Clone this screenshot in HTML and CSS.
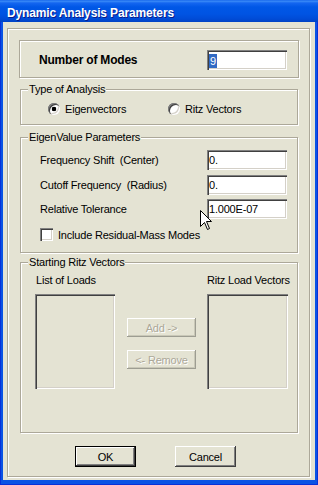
FILE: index.html
```
<!DOCTYPE html>
<html lang="en">
<head>
    <meta charset="UTF-8">
    <meta name="viewport" content="width=device-width, initial-scale=1.0">
    <title>Dynamic Analysis Parameters</title>
    <link rel="stylesheet" href="styles.css">
</head>
<body>
    <div class="window">
        <div class="titlebar">
            <span class="title">Dynamic Analysis Parameters</span>
        </div>
        <div class="client">
            <div class="frame">
                <div class="modes-panel">
                    <span class="modes-label">Number of Modes</span>
                    <div class="field"><span class="selected">9</span></div>
                </div>

                <fieldset class="group type-group">
                    <legend>Type of Analysis</legend>
                    <div class="radio-row">
                        <label class="option option-first"><span class="radio checked"></span>Eigenvectors</label>
                        <label class="option"><span class="radio"></span>Ritz Vectors</label>
                    </div>
                </fieldset>

                <fieldset class="group eigen-group">
                    <legend>EigenValue Parameters</legend>
                    <div class="param-row row-1">
                        <span class="param-label">Frequency Shift  (Center)</span>
                        <div class="field">0.</div>
                    </div>
                    <div class="param-row row-2">
                        <span class="param-label">Cutoff Frequency  (Radius)</span>
                        <div class="field">0.</div>
                    </div>
                    <div class="param-row row-3">
                        <span class="param-label">Relative Tolerance</span>
                        <div class="field">1.000E-07</div>
                    </div>
                    <label class="check-row"><span class="checkbox"></span>Include Residual-Mass Modes</label>
                </fieldset>

                <fieldset class="group ritz-group">
                    <legend>Starting Ritz Vectors</legend>
                    <div class="ritz-cols">
                        <div class="ritz-col col-left">
                            <span class="col-label">List of Loads</span>
                            <div class="listbox"></div>
                        </div>
                        <div class="ritz-mid">
                            <button class="btn btn-disabled">Add -&gt;</button>
                            <button class="btn btn-disabled btn-remove">&lt;- Remove</button>
                        </div>
                        <div class="ritz-col col-right">
                            <span class="col-label">Ritz Load Vectors</span>
                            <div class="listbox"></div>
                        </div>
                    </div>
                </fieldset>

                <div class="dialog-buttons">
                    <button class="btn btn-default">OK</button>
                    <button class="btn">Cancel</button>
                </div>
            </div>
        </div>

        <!-- mouse pointer left over the tolerance box -->
        <svg class="cursor" width="13" height="21" viewBox="0 0 13 21">
            <path d="M0.5 0.5 V16.5 L4.5 12.5 L7.5 19.5 L9.5 18.5 L6.5 11.5 H11.5 Z" fill="#fff" stroke="#000" stroke-width="1"/>
        </svg>
    </div>
</body>
</html>
```

FILE: styles.css
```
:root {
    --face: #e4e3d3;
    --etch: #aca899;
    --dark: #404040;
    --mid: #808080;
    --light: #ffffff;
    --frame-blue: #0a53e4;
    --select: #316ac5;
}

* {
    box-sizing: border-box;
    margin: 0;
    padding: 0;
}

body {
    font-family: 'Liberation Sans', Arial, sans-serif;
    font-size: 11px;
    letter-spacing: -0.2px;
    color: #000;
    background-color: var(--face);
}

.window {
    position: relative;
    width: 318px;
    height: 485px;
    display: flex;
    flex-direction: column;
    background-color: var(--frame-blue);
    box-shadow: inset 1px 0 #0831d9, inset -1px 0 #0831d9, inset 0 -1px #0831d9;
}

.titlebar {
    height: 22px;
    padding: 6px 0 0 7px;
    background: linear-gradient(180deg, #0a5ae8 0, #3d8ef8 1px, #1466f0 3px, #0057e6 7px, #0054e3 14px, #004bd6 19px, #0042c4 22px);
}

.title {
    display: block;
    line-height: 14px;
    font-size: 12px;
    font-weight: bold;
    letter-spacing: -0.15px;
    color: #fff;
    text-shadow: 1px 1px #0a1c8a;
}

.client {
    flex: 1;
    margin: 0 3px 5px;
    padding: 6px 5px 3px 4px;
    background-color: var(--face);
    display: flex;
    flex-direction: column;
}

.frame {
    flex: 1;
    border: 1px solid var(--etch);
    box-shadow: inset 1px 1px var(--light), 1px 1px var(--light);
    padding: 0 10px 0 11px;
    display: flex;
    flex-direction: column;
}

/* number of modes box */
.modes-panel {
    margin-top: 11px;
    height: 38px;
    border: 1px solid var(--etch);
    box-shadow: inset 1px 1px var(--light), 1px 1px var(--light);
    padding: 2px 11px 0 19px;
    display: flex;
    align-items: center;
    justify-content: space-between;
}

.modes-label {
    font-size: 12px;
    font-weight: bold;
    letter-spacing: -0.2px;
}

.field {
    width: 80px;
    height: 20px;
    padding-left: 2px;
    line-height: 20px;
    background-color: #fff;
    box-shadow: inset 1px 1px var(--mid), inset 2px 2px var(--dark), inset -1px -1px var(--light), inset -2px -2px #d4d0c8;
    white-space: nowrap;
}

.selected {
    display: inline-block;
    height: 14px;
    line-height: 14px;
    padding: 0 1px;
    vertical-align: middle;
    background-color: var(--select);
    color: #fff;
}

/* group boxes */
.group {
    margin: 0 1px;
    padding: 0;
    min-width: 0;
    border: 1px solid var(--etch);
    box-shadow: inset 1px 1px var(--light), 1px 1px var(--light);
}

.group legend {
    margin-left: 7px;
    padding: 0 1px;
    line-height: 13px;
    background-color: var(--face);
}

.type-group {
    margin-top: 5px;
    height: 42px;
}

.radio-row {
    display: flex;
    padding: 6px 0 0 27px;
}

.option {
    display: flex;
    align-items: center;
    gap: 5px;
    height: 13px;
}

.option-first {
    width: 120px;
}

.radio {
    width: 12px;
    height: 12px;
    border-radius: 50%;
    background-color: #fff;
    box-shadow: inset 1px 1px var(--mid), inset 2px 2px var(--dark), inset -1px -1px var(--light), inset -2px -2px #d4d0c8;
}

.radio.checked {
    background: radial-gradient(circle at 6px 6px, #000 0, #000 2px, #fff 2.6px);
}

.eigen-group {
    margin-top: 6px;
    height: 122px;
}

.param-row {
    height: 20px;
    padding: 0 10px 0 19px;
    display: flex;
    align-items: center;
    justify-content: space-between;
}

.param-label {
    white-space: pre;
}

.row-1 { margin-top: 6px; }
.row-2 { margin-top: 5px; }
.row-3 { margin-top: 4px; }

.check-row {
    margin-top: 9px;
    padding-left: 19px;
    height: 13px;
    display: flex;
    align-items: center;
    gap: 5px;
}

.checkbox {
    width: 13px;
    height: 13px;
    background-color: #fff;
    box-shadow: inset 1px 1px var(--mid), inset 2px 2px var(--dark), inset -1px -1px var(--light), inset -2px -2px #d4d0c8;
}

.ritz-group {
    margin-top: 3px;
    height: 177px;
}

.ritz-cols {
    display: flex;
    padding: 5px 0 0 14px;
}

.ritz-col {
    display: flex;
    flex-direction: column;
}

.col-left { width: 80px; }

.col-right {
    width: 81px;
    margin-left: 11px;
}

.col-label {
    line-height: 13px;
    white-space: nowrap;
}

.col-left .col-label { margin-left: 1px; }

.listbox {
    margin-top: 7px;
    height: 95px;
    background-color: var(--face);
    box-shadow: inset 1px 1px var(--mid), inset 2px 2px var(--dark), inset -1px -1px var(--light), inset -2px -2px #d4d0c8;
}

.ritz-mid {
    width: 69px;
    margin-left: 12px;
    padding-top: 44px;
    display: flex;
    flex-direction: column;
}

/* buttons */
.btn {
    font-family: inherit;
    font-size: 11px;
    letter-spacing: -0.2px;
    color: #000;
    background-color: var(--face);
    border: none;
    padding: 0;
    box-shadow: inset -1px -1px var(--dark), inset 1px 1px var(--light), inset -2px -2px var(--mid);
}

.btn-disabled {
    height: 19px;
    color: var(--etch);
    text-shadow: 1px 1px var(--light);
    box-shadow: inset -1px -1px #9d9d92, inset 1px 1px var(--light), inset -2px -2px #c9c8b8;
}

.btn-remove { margin-top: 13px; }

.dialog-buttons {
    margin: 13px 0 0 56px;
    display: flex;
    gap: 39px;
}

.dialog-buttons .btn {
    width: 61px;
    height: 21px;
}

.btn-default {
    border: 1px solid #000;
}

.cursor {
    position: absolute;
    left: 200px;
    top: 210px;
}
```
